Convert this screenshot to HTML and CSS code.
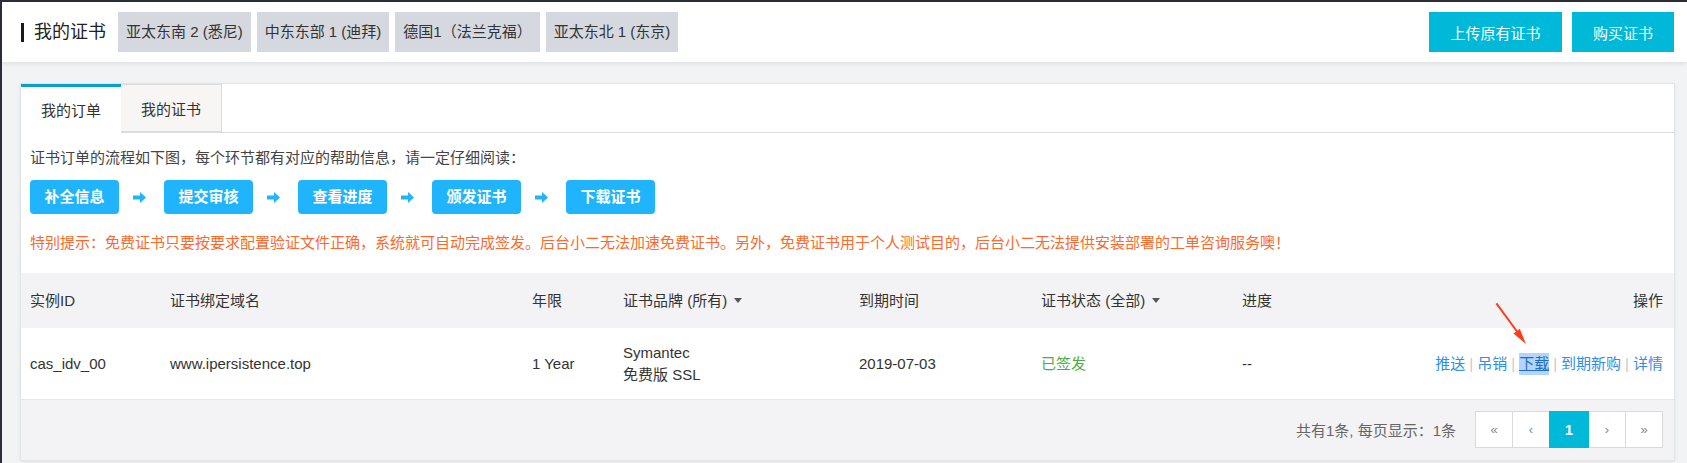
FILE: index.html
```html
<!DOCTYPE html>
<html lang="zh-CN">
<head>
<meta charset="utf-8">
<title>我的证书</title>
<link rel="stylesheet" href="styles.css">
</head>
<body>
<div class="frame">
  <header class="topbar">
    <div class="title">我的证书</div>
    <nav class="regions">
      <span class="region">亚太东南 2 (悉尼)</span>
      <span class="region">中东东部 1 (迪拜)</span>
      <span class="region">德国1（法兰克福）</span>
      <span class="region">亚太东北 1 (东京)</span>
    </nav>
    <div class="top-actions">
      <button class="btn-cyan btn-upload">上传原有证书</button>
      <button class="btn-cyan btn-buy">购买证书</button>
    </div>
  </header>

  <main class="panel">
    <div class="tabs">
      <div class="tab active">我的订单</div>
      <div class="tab">我的证书</div>
    </div>

    <div class="content">
      <p class="intro">证书订单的流程如下图，每个环节都有对应的帮助信息，请一定仔细阅读：</p>
      <div class="steps">
        <span class="step">补全信息</span>
        <svg class="step-arrow" viewBox="0 0 13 11" width="13" height="11"><path d="M0 3.6h7V0l6 5.5-6 5.5V7.4H0z"/></svg>
        <span class="step">提交审核</span>
        <svg class="step-arrow" viewBox="0 0 13 11" width="13" height="11"><path d="M0 3.6h7V0l6 5.5-6 5.5V7.4H0z"/></svg>
        <span class="step">查看进度</span>
        <svg class="step-arrow" viewBox="0 0 13 11" width="13" height="11"><path d="M0 3.6h7V0l6 5.5-6 5.5V7.4H0z"/></svg>
        <span class="step">颁发证书</span>
        <svg class="step-arrow" viewBox="0 0 13 11" width="13" height="11"><path d="M0 3.6h7V0l6 5.5-6 5.5V7.4H0z"/></svg>
        <span class="step">下载证书</span>
      </div>
      <p class="notice">特别提示：免费证书只要按要求配置验证文件正确，系统就可自动完成签发。后台小二无法加速免费证书。另外，免费证书用于个人测试目的，后台小二无法提供安装部署的工单咨询服务噢！</p>
    </div>

    <div class="table">
      <div class="thead">
        <div class="cell">实例ID</div>
        <div class="cell">证书绑定域名</div>
        <div class="cell">年限</div>
        <div class="cell">证书品牌 (所有)<span class="caret"></span></div>
        <div class="cell">到期时间</div>
        <div class="cell">证书状态 (全部)<span class="caret"></span></div>
        <div class="cell">进度</div>
        <div class="cell cell-right">操作</div>
      </div>
      <div class="trow">
        <div class="cell">cas_idv_00</div>
        <div class="cell">www.ipersistence.top</div>
        <div class="cell">1 Year</div>
        <div class="cell brand"><span>Symantec</span><span>免费版 SSL</span></div>
        <div class="cell">2019-07-03</div>
        <div class="cell status">已签发</div>
        <div class="cell">--</div>
        <div class="cell cell-right ops">
          <a class="op">推送</a><span class="sep">|</span><a class="op">吊销</a><span class="sep">|</span><a class="op op-selected">下载</a><span class="sep">|</span><a class="op">到期新购</a><span class="sep">|</span><a class="op">详情</a>
        </div>
        <svg class="pointer" width="44" height="50" viewBox="0 0 44 50">
          <line x1="6.4" y1="5.3" x2="27" y2="33.5" stroke="#ff3d1c" stroke-width="2"/>
          <polygon points="36,46 23.4,35.5 29.8,30.8" fill="#ff3d1c"/>
        </svg>
      </div>
    </div>

    <div class="footer">
      <span class="total">共有1条, 每页显示：1条</span>
      <div class="pager">
        <span class="page">«</span>
        <span class="page">‹</span>
        <span class="page current">1</span>
        <span class="page">›</span>
        <span class="page">»</span>
      </div>
    </div>
  </main>
</div>
</body>
</html>
```

FILE: styles.css
```css
* { box-sizing: border-box; }

html, body {
  margin: 0;
  padding: 0;
}

body {
  background: #f2f3f5;
  font-family: "Liberation Sans", "Noto Sans CJK SC", sans-serif;
  color: #333;
  font-size: 15px;
}

.frame {
  border-top: 2px solid #2b2e35;
  border-left: 2px solid #2b2e35;
  min-height: 463px;
}

/* ---------- top bar ---------- */
.topbar {
  height: 60px;
  background: #fff;
  display: flex;
  align-items: center;
  padding: 0 13px 0 19px;
  box-shadow: 0 2px 4px rgba(0, 0, 0, 0.08);
  position: relative;
}

.title {
  display: flex;
  align-items: center;
  font-size: 18px;
  line-height: 24px;
  color: #222;
  margin-right: 12px;
}

.title::before {
  content: "";
  width: 3px;
  height: 19px;
  background: #1b1b1b;
  margin-right: 10px;
}

.regions {
  display: flex;
  gap: 6px;
}

.region {
  height: 40px;
  line-height: 40px;
  padding: 0 8px;
  background: #d5d9df;
  color: #333;
  font-size: 15px;
  white-space: nowrap;
}

.top-actions {
  margin-left: auto;
  display: flex;
  gap: 10px;
}

.btn-cyan {
  height: 40px;
  border: 0;
  background: #00b8d8;
  color: #fff;
  font-family: inherit;
  font-size: 15px;
  padding: 0;
  cursor: pointer;
}

.btn-upload { width: 133px; }
.btn-buy { width: 102px; }

/* ---------- panel ---------- */
.panel {
  margin: 22px 13px 0 19px;
  background: #fff;
  box-shadow: 0 0 0 1px #e4e5e7, 0 1px 4px rgba(0, 0, 0, 0.12);
}

.tabs {
  display: flex;
  height: 49px;
  border-bottom: 1px solid #dcdcdc;
}

.tab {
  width: 101px;
  height: 48px;
  display: flex;
  align-items: center;
  justify-content: center;
  font-size: 15px;
  color: #333;
  background: #f7f6f5;
  border: 1px solid #dcdcdc;
  border-left: 0;
}

.tab.active {
  width: 100px;
  height: 49px;
  background: #fff;
  border: 0;
  border-top: 3px solid #0ba0cc;
  margin-bottom: -1px;
  padding-bottom: 2px;
}

.content {
  padding: 0 9px;
}

.intro {
  margin: 13px 0 0;
  line-height: 24px;
  font-size: 15px;
  color: #444;
}

.steps {
  margin-top: 10px;
  display: flex;
  align-items: center;
}

.step {
  width: 89px;
  height: 34px;
  line-height: 34px;
  text-align: center;
  background: #1fb4fb;
  color: #fff;
  border-radius: 4px;
  font-size: 15px;
  font-weight: bold;
}

.step-arrow {
  fill: #1fb4fb;
  margin: 0 18px 0 14px;
  flex: none;
}

.notice {
  margin: 17px 0 0;
  line-height: 24px;
  font-size: 15px;
  color: #fb6a2c;
}

/* ---------- table ---------- */
.table {
  margin-top: 18px;
}

.thead,
.trow {
  display: grid;
  grid-template-columns: 140px 362px 91px 236px 182px 201px 170px minmax(0, 1fr);
  align-items: center;
  position: relative;
}

.thead {
  height: 55px;
  background: #f3f3f5;
}

.trow {
  height: 72px;
  background: #fff;
  border-bottom: 1px solid #e6e6e8;
}

.cell {
  padding: 0 11px 0 9px;
  font-size: 15px;
  line-height: 22px;
  color: #333;
  white-space: nowrap;
  display: flex;
  align-items: center;
}

.cell-right {
  justify-content: flex-end;
}

.caret {
  display: inline-block;
  width: 0;
  height: 0;
  margin-left: 7px;
  border-left: 4.5px solid transparent;
  border-right: 4.5px solid transparent;
  border-top: 5px solid #555;
}

.brand {
  flex-direction: column;
  align-items: flex-start;
}

.status {
  color: #4aae46;
}

.ops .op {
  color: #2f8ded;
  text-decoration: none;
}

.ops .sep {
  color: #c8c8c8;
  margin: 0 4px;
}

.ops .op-selected {
  background: #b4d4fb;
  text-decoration: underline;
  color: #1f6fc0;
}

.pointer {
  position: absolute;
  right: 140px;
  top: -30px;
}

/* ---------- footer ---------- */
.footer {
  background: #f3f3f5;
  display: flex;
  justify-content: flex-end;
  align-items: center;
  gap: 20px;
  padding: 11px 11px 12px;
}

.total {
  color: #666;
  font-size: 15px;
}

.pager {
  display: flex;
}

.page {
  width: 38px;
  height: 37px;
  display: flex;
  align-items: center;
  justify-content: center;
  background: #fff;
  border: 1px solid #dadada;
  margin-left: -1px;
  color: #888;
  font-size: 13px;
}

.page.current {
  width: 40px;
  background: #00b8d8;
  border-color: #00b8d8;
  color: #fff;
  font-weight: bold;
  font-size: 15px;
  position: relative;
}
```
